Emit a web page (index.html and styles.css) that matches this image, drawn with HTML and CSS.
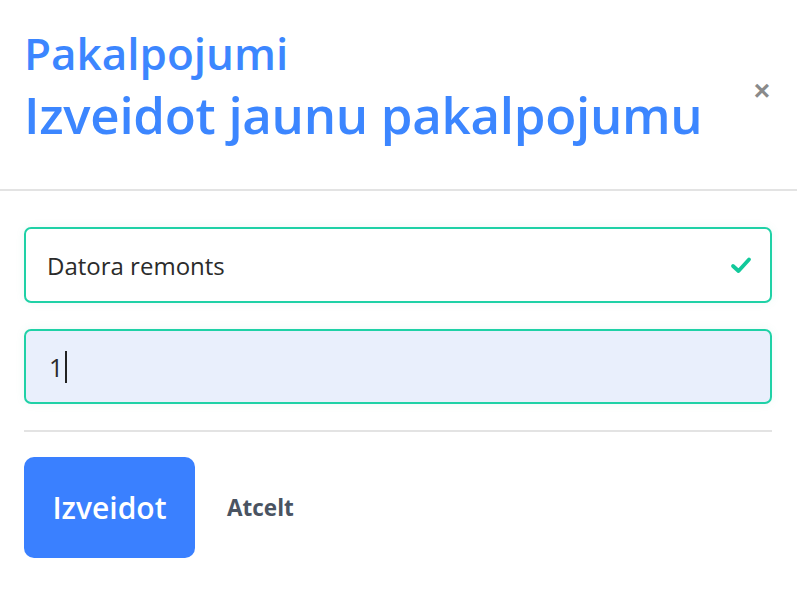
FILE: index.html
```html
<!DOCTYPE html>
<html lang="lv">
<head>
<meta charset="utf-8">
<link rel="stylesheet" href="styles.css">
</head>
<body>
<div class="modal">
  <header class="modal-head">
    <div class="titles">
      <div class="eyebrow">Pakalpojumi</div>
      <h1 class="title">Izveidot jaunu pakalpojumu</h1>
    </div>
    <button class="close" aria-label="Aizvērt">&times;</button>
  </header>
  <div class="modal-body">
    <div class="field valid">
      <span class="value">Datora remonts</span>
      <svg class="check" width="22" height="18" viewBox="0 0 22 18"><path d="M3 10 L8.5 15 L19 3.5" fill="none" stroke="#12c99b" stroke-width="3.8" stroke-linecap="round" stroke-linejoin="round"/></svg>
    </div>
    <div class="field focused">
      <span class="value">1</span><span class="caret"></span>
    </div>
    <hr class="sep">
    <div class="actions">
      <button class="btn-primary">Izveidot</button>
      <button class="btn-link">Atcelt</button>
    </div>
  </div>
</div>
</body>
</html>
```
FILE: styles.css
```css
* { box-sizing: border-box; }
html, body { margin: 0; padding: 0; background: #fff; }
body { font-family: "Open Sans", "Noto Sans", sans-serif; width: 797px; height: 602px; overflow: hidden; }
.modal-head {
  display: flex;
  align-items: flex-start;
  justify-content: space-between;
  padding: 25px 24px 0 24px;
  height: 191px;
  border-bottom: 2px solid #e3e3e3;
}
.eyebrow { font-size: 44px; font-weight: 600; color: #3c86ff; line-height: 56px; letter-spacing: 0; }
.title { margin: 0; font-size: 51px; font-weight: 600; color: #3c86ff; line-height: 66px; letter-spacing: -0.3px; }
.close {
  border: 0; background: none; padding: 0; margin-top: 51px; margin-right: 3px;
  font-family: "Liberation Sans", sans-serif; font-size: 28px; font-weight: 700; color: #8a8a8a; line-height: 30px;
}
.modal-body { padding: 36px 25px 0 24px; }
.field {
  height: 76px; border: 2px solid #1fd1a6; border-radius: 7px;
  display: flex; align-items: center; padding: 0 18px 0 21px;
  box-shadow: 0 0 10px rgba(0,180,140,0.08);
  font-size: 24px; color: #2b2b2b;
}
.field + .field { margin-top: 26px; }
.valid { background: #fff; }
.value { flex: none; }
.valid .check { margin-left: auto; }
.focused { background: #e9effc; height: 75px; padding-left: 23px; }
.focused .value { font-size: 25px; }
.caret { display: inline-block; width: 2px; height: 32px; background: #222; margin-left: 2px; }
.sep { border: 0; border-top: 2px solid #e3e3e3; margin: 26px 0 25px; }
.actions { display: flex; align-items: center; }
.btn-primary {
  width: 171px; height: 101px; border: 0; border-radius: 10px; background: #3a80ff; color: #fff;
  font-family: inherit; font-size: 30px; font-weight: 600; padding: 0;
}
.btn-link {
  border: 0; background: none; margin-left: 32px; padding: 0;
  font-family: inherit; font-size: 22.5px; font-weight: 700; color: #4a5462;
}
```
